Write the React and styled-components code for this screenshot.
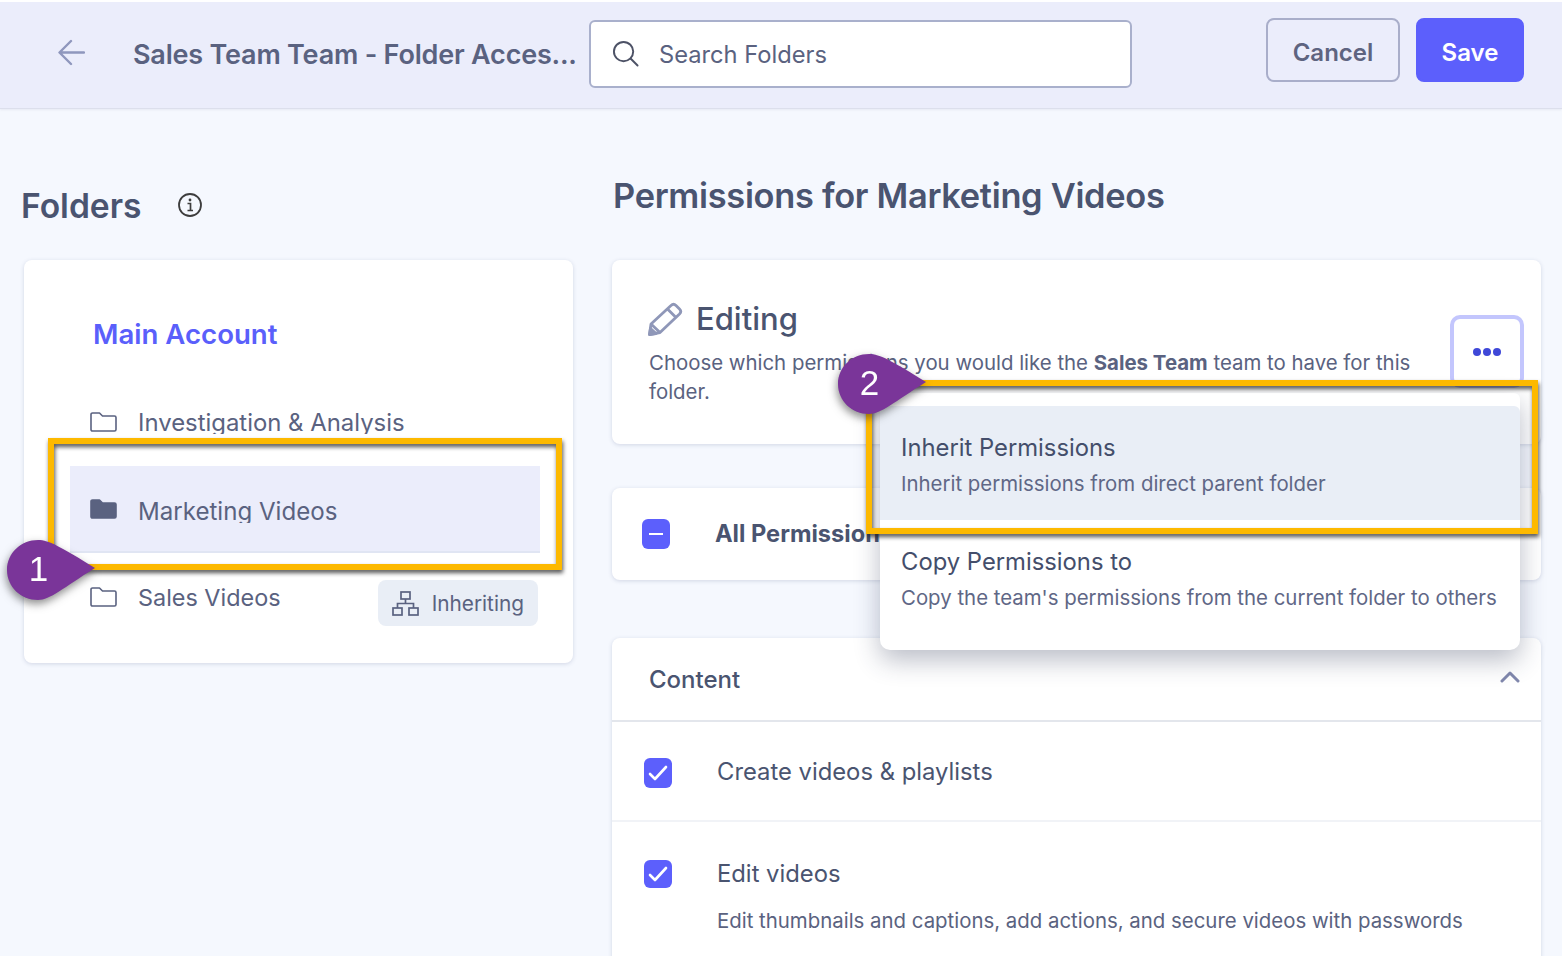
import styled, { createGlobalStyle } from 'styled-components';

const GlobalStyle = createGlobalStyle`
  html, body {
    margin: 0;
    padding: 0;
    height: 100%;
    overflow: hidden;
    background: #f5f8fe;
    font-family: Inter, "Noto Sans", sans-serif;
    color: #5a6280;
  }
  * { box-sizing: border-box; }
`;

const Page = styled.div`
  position: relative;
  width: 1562px;
  height: 956px;
  overflow: hidden;
  border-top: 2px solid #fff;
`;

const Header = styled.header`
  display: flex;
  align-items: center;
  height: 107px;
  padding: 0 38px 0 58px;
  background: #ebedfb;
  border-bottom: 1px solid #dcdfec;
  box-shadow: 0 1px 2px rgba(60, 70, 110, 0.08);
`;

const BackButton = styled.button`
  display: flex;
  width: 27px;
  height: 27px;
  margin: 0 48px 6px 0;
  padding: 0;
  border: 0;
  background: none;
  color: #8f97bd;
`;

const HeaderTitle = styled.h1`
  width: 456px;
  margin: 0 0 2px;
  font-size: 27px;
  font-weight: 600;
  letter-spacing: -0.2px;
  white-space: nowrap;
  color: #5a6280;
`;

const SearchBox = styled.div`
  display: flex;
  align-items: center;
  gap: 20px;
  width: 543px;
  height: 68px;
  margin-bottom: 2px;
  padding: 1px 0 0 21px;
  background: #fff;
  border: 2px solid #a9b0cc;
  border-radius: 6px;
  font-size: 23.7px;
  color: #5a6280;
  svg { margin-top: -2px; color: #4d5266; }
`;

const HeaderActions = styled.div`
  display: flex;
  gap: 16px;
  margin: 0 0 10px auto;
`;

const ActionButton = styled.button`
  height: 64px;
  width: ${p => p.$width}px;
  padding: 5px 0 0;
  border-radius: 8px;
  font: 600 24px Inter, sans-serif;
  border: 2px solid ${p => (p.$primary ? '#5c5ffc' : '#a9aeca')};
  background: ${p => (p.$primary ? '#5c5ffc' : 'transparent')};
  color: ${p => (p.$primary ? '#fff' : '#5e6480')};
`;

const Main = styled.main`
  display: flex;
  padding-left: 21px;
`;

const LeftColumn = styled.section`
  width: 552px;
  margin-right: 39px;
`;

const RightColumn = styled.section`
  width: 929px;
`;

const FoldersHead = styled.div`
  display: flex;
  align-items: center;
  gap: 37px;
  height: 151px;
  padding-top: 42px;
  svg { margin-top: -2px; color: #3d3d3d; }
`;

const FoldersTitle = styled.h2`
  margin: 0;
  font-size: 33.6px;
  font-weight: 600;
  color: #4a5470;
`;

const PermissionsHead = styled.div`
  display: flex;
  align-items: center;
  height: 151px;
  padding: 21px 0 0 1px;
`;

const PermissionsTitle = styled.h2`
  margin: 0;
  font-size: 34.4px;
  font-weight: 600;
  letter-spacing: -0.3px;
  color: #4a5470;
`;

const Card = styled.div`
  background: #fff;
  border-radius: 8px;
  box-shadow: 0 1px 4px rgba(70, 85, 130, 0.2);
`;

const FolderCard = styled(Card)`
  height: 403px;
  margin-left: 3px;
  padding: 56px 33px 0 46px;
`;

const AccountLink = styled.div`
  height: 64px;
  padding-left: 23px;
  font-size: 27.6px;
  line-height: 36px;
  font-weight: 600;
  color: #5a5ffb;
`;

const FolderRow = styled.div`
  display: flex;
  align-items: ${p => (p.$active ? 'center' : 'flex-start')};
  height: ${p => p.$height}px;
  margin-bottom: ${p => p.$after || 0}px;
  padding: ${p => p.$top || 0}px 2px 0 20px;
  background: ${p => (p.$active ? '#ebedfb' : 'transparent')};
  border-bottom: ${p => (p.$active ? '2px solid #e0e5f3' : '0')};
  svg { flex: none; margin-top: ${p => (p.$active ? 0 : 3)}px; color: #5a6280; }
`;

const FolderName = styled.span`
  display: block;
  height: 24px;
  margin: ${p => (p.$active ? 4 : 1)}px 0 0 21px;
  overflow: hidden;
  font-size: ${p => p.$size || 23.9}px;
  line-height: 26px;
  white-space: nowrap;
  color: #5a6280;
`;

const InheritChip = styled.div`
  display: flex;
  align-items: center;
  gap: 13px;
  height: 46px;
  margin: -4px 0 0 auto;
  padding: 0 14px;
  background: #e9eef6;
  border-radius: 8px;
  font-size: 20.8px;
  color: #5a6280;
  svg { margin-top: 0; }
`;

const EditingCard = styled(Card)`
  display: flex;
  height: 184px;
  margin-bottom: 44px;
  padding: 40px 17px 0 37px;
`;

const EditingBody = styled.div`
  flex: 1;
`;

const EditingTitle = styled.div`
  display: flex;
  align-items: center;
  gap: 13px;
  margin-left: -2px;
  font-size: 31px;
  font-weight: 500;
  color: #4a5470;
  svg { color: #8f97b8; }
`;

const Description = styled.p`
  width: 790px;
  margin: 11px 0 0;
  font-size: 20.4px;
  line-height: 29px;
  color: #5a6280;
  b { font-weight: 700; }
`;

const MoreButton = styled.button`
  display: flex;
  align-items: center;
  justify-content: center;
  flex: none;
  width: 74px;
  height: 73px;
  margin-top: 15px;
  padding: 0;
  background: #fff;
  border: 4px solid #c3c6fd;
  border-radius: 10px;
  color: #3f48d8;
`;

const AllCard = styled(Card)`
  display: flex;
  align-items: center;
  gap: 45px;
  height: 92px;
  margin-bottom: 58px;
  padding-left: 30px;
`;

const AllLabel = styled.span`
  margin-top: -2px;
  font-size: 23.6px;
  font-weight: 700;
  color: #4a5470;
`;

const CheckBox = styled.span`
  display: flex;
  align-items: center;
  justify-content: center;
  flex: none;
  width: 28px;
  height: ${p => p.$height || 30}px;
  background: #5c5ffc;
  border-radius: 6px;
  color: #fff;
`;

const ContentCard = styled(Card)`
  height: 400px;
`;

const ContentHead = styled.div`
  display: flex;
  align-items: center;
  justify-content: space-between;
  height: 84px;
  padding: 0 21px 0 37px;
  border-bottom: 2px solid #e3e6ec;
  font-size: 24px;
  font-weight: 500;
  color: #4a5470;
  svg { margin-bottom: 6px; color: #8188ad; }
`;

const PermissionRow = styled.div`
  display: flex;
  align-items: flex-start;
  gap: 45px;
  height: ${p => p.$height}px;
  padding: ${p => p.$top}px 0 0 32px;
  border-bottom: ${p => (p.$last ? '0' : '2px solid #f1f3f7')};
`;

const PermissionLabel = styled.div`
  font-size: 23.8px;
  line-height: 28px;
  color: #4a5470;
`;

const PermissionNote = styled.div`
  margin-top: 19px;
  font-size: 20.4px;
  line-height: 28px;
  color: #5a6280;
`;

const Menu = styled.div`
  position: absolute;
  left: 880px;
  top: 391px;
  width: 640px;
  height: 257px;
  padding-top: 13px;
  background: #fff;
  border-radius: 6px 6px 10px 10px;
  box-shadow: 0 10px 26px rgba(40, 50, 80, 0.32);
`;

const MenuItem = styled.div`
  height: ${p => (p.$active ? 114 : 130)}px;
  padding: 27px 0 0 21px;
  background: ${p => (p.$active ? '#e9eef6' : 'transparent')};
  border-radius: ${p => (p.$active ? '6px 6px 0 0' : '0')};
`;

const MenuTitle = styled.div`
  font-size: 23.8px;
  line-height: 30px;
  color: #444e6b;
`;

const MenuNote = styled.div`
  margin-top: 6px;
  font-size: 20.4px;
  line-height: 30px;
  color: #5f6786;
`;

const Highlight = styled.div`
  position: absolute;
  left: ${p => p.$left}px;
  top: ${p => p.$top}px;
  width: ${p => p.$width}px;
  height: ${p => p.$height}px;
  border: 6px solid #fdb900;
  filter: drop-shadow(1px 3px 2px rgba(30, 30, 30, 0.75));
`;

const Marker = styled.div`
  position: absolute;
  left: ${p => p.$left}px;
  top: ${p => p.$top}px;
  width: 96px;
  height: 68px;
  filter: drop-shadow(-1px 4px 4px rgba(30, 30, 30, 0.5));
  svg { display: block; }
`;

const MarkerNumber = styled.span`
  position: absolute;
  left: 0;
  top: 0;
  width: 63px;
  height: 58px;
  font: 500 35px/58px "Liberation Sans", sans-serif;
  text-align: center;
  color: #fff;
`;

const Arrow = () => (
  <svg width="27" height="27" viewBox="0 0 27 27" fill="none" stroke="currentColor" strokeWidth="2.4" strokeLinecap="round" strokeLinejoin="round">
    <path d="M26 13.5H2M13 2 1.5 13.5 13 25" />
  </svg>
);

const Search = () => (
  <svg width="27" height="27" viewBox="0 0 28 28" fill="none" stroke="currentColor" strokeWidth="2" strokeLinecap="round">
    <circle cx="12" cy="12" r="10" />
    <path d="m19.5 19.5 7 7" />
  </svg>
);

const Info = () => (
  <svg width="24" height="24" viewBox="0 0 24 24" fill="none" stroke="currentColor">
    <circle cx="12" cy="12" r="11" strokeWidth="1.8" />
    <circle cx="12" cy="7" r="1.4" fill="currentColor" stroke="none" />
    <path d="M9.5 10.5H12.5V17.5M9.5 17.5H15" strokeWidth="1.7" />
  </svg>
);

const Folder = ({ filled }) => (
  <svg width="27" height="20" viewBox="0 0 27 20" fill={filled ? 'currentColor' : 'none'} stroke="currentColor" strokeWidth="1.6" strokeLinejoin="round">
    <path d="M1 17.5V2.5C1 1.6 1.6 1 2.5 1H9.5L12.5 4H24.5C25.4 4 26 4.6 26 5.5V17.5C26 18.4 25.4 19 24.5 19H2.5C1.6 19 1 18.4 1 17.5Z" />
  </svg>
);

const Hierarchy = () => (
  <svg width="27" height="25" viewBox="0 0 27 25" fill="none" stroke="currentColor" strokeWidth="1.7">
    <rect x="9" y="1" width="9" height="7" />
    <rect x="1" y="17" width="9" height="7" />
    <rect x="17" y="17" width="9" height="7" />
    <path d="M13.5 8v4.500M5.500 17v-4.500h16V17" />
  </svg>
);

const Pencil = () => (
  <svg width="36" height="34" viewBox="0 0 36 34" fill="none" stroke="currentColor" strokeWidth="2.8" strokeLinejoin="round">
    <path d="M4 22 24 3.500C25.500 2 27.500 2 29 3.500L32.500 7C34 8.500 34 10.500 32.500 12L13 30.500 2.500 32.500Z" />
    <path d="m20.500 7 9 9M4 22l9 8.500" />
    <path d="M2.500 32.500 3.500 26.500 9 31.500Z" fill="currentColor" />
  </svg>
);

const Dots = () => (
  <svg width="30" height="10" viewBox="0 0 30 10" fill="currentColor">
    <circle cx="5" cy="5" r="4" />
    <circle cx="15" cy="5" r="4" />
    <circle cx="25" cy="5" r="4" />
  </svg>
);

const Check = () => (
  <svg width="20" height="16" viewBox="0 0 20 16" fill="none" stroke="currentColor" strokeWidth="2.6" strokeLinecap="round" strokeLinejoin="round">
    <path d="m2 9 5 5L18 2" />
  </svg>
);

const Minus = () => (
  <svg width="14" height="4" viewBox="0 0 14 4" fill="none" stroke="currentColor" strokeWidth="2">
    <path d="M0 2h14" />
  </svg>
);

const Chevron = () => (
  <svg width="20" height="13" viewBox="0 0 20 13" fill="none" stroke="currentColor" strokeWidth="3" strokeLinecap="round" strokeLinejoin="round">
    <path d="M2 11 10 3l8 8" />
  </svg>
);

const Drop = () => (
  <svg width="96" height="68" viewBox="0 0 96 68">
    <path d="M31 0C42 0 54 7 88 28 56 48 43 60 31 60 14 60 0 47 0 30S14 0 31 0Z" fill="#7a3599" />
  </svg>
);

function App() {
  return (
    <Page>
      <GlobalStyle />
      <Header>
        <BackButton><Arrow /></BackButton>
        <HeaderTitle>Sales Team Team - Folder Acces...</HeaderTitle>
        <SearchBox><Search />Search Folders</SearchBox>
        <HeaderActions>
          <ActionButton $width={134}>Cancel</ActionButton>
          <ActionButton $width={108} $primary>Save</ActionButton>
        </HeaderActions>
      </Header>
      <Main>
        <LeftColumn>
          <FoldersHead>
            <FoldersTitle>Folders</FoldersTitle>
            <Info />
          </FoldersHead>
          <FolderCard>
            <AccountLink>Main Account</AccountLink>
            <FolderRow $height={56} $top={29} $after={30}>
              <Folder /><FolderName>Investigation &amp; Analysis</FolderName>
            </FolderRow>
            <FolderRow $height={87} $active>
              <Folder filled /><FolderName $active $size={24.1}>Marketing Videos</FolderName>
            </FolderRow>
            <FolderRow $height={80} $top={31}>
              <Folder /><FolderName $size={23.4}>Sales Videos</FolderName>
              <InheritChip><Hierarchy />Inheriting</InheritChip>
            </FolderRow>
          </FolderCard>
        </LeftColumn>
        <RightColumn>
          <PermissionsHead>
            <PermissionsTitle>Permissions for Marketing Videos</PermissionsTitle>
          </PermissionsHead>
          <EditingCard>
            <EditingBody>
              <EditingTitle><Pencil />Editing</EditingTitle>
              <Description>
                Choose which permissions you would like the <b>Sales Team</b> team to have for this folder.
              </Description>
            </EditingBody>
            <MoreButton><Dots /></MoreButton>
          </EditingCard>
          <AllCard>
            <CheckBox><Minus /></CheckBox>
            <AllLabel>All Permissions</AllLabel>
          </AllCard>
          <ContentCard>
            <ContentHead>Content<Chevron /></ContentHead>
            <PermissionRow $height={100} $top={36}>
              <CheckBox><Check /></CheckBox>
              <PermissionLabel>Create videos &amp; playlists</PermissionLabel>
            </PermissionRow>
            <PermissionRow $height={200} $top={38} $last>
              <CheckBox $height={28}><Check /></CheckBox>
              <div>
                <PermissionLabel>Edit videos</PermissionLabel>
                <PermissionNote>Edit thumbnails and captions, add actions, and secure videos with passwords</PermissionNote>
              </div>
            </PermissionRow>
          </ContentCard>
        </RightColumn>
      </Main>
      <Menu>
        <MenuItem $active>
          <MenuTitle>Inherit Permissions</MenuTitle>
          <MenuNote>Inherit permissions from direct parent folder</MenuNote>
        </MenuItem>
        <MenuItem>
          <MenuTitle>Copy Permissions to</MenuTitle>
          <MenuNote>Copy the team's permissions from the current folder to others</MenuNote>
        </MenuItem>
      </Menu>
      <Highlight $left={48} $top={436} $width={514} $height={132} />
      <Highlight $left={866} $top={378} $width={672} $height={154} />
      <Marker $left={7} $top={538}><Drop /><MarkerNumber>1</MarkerNumber></Marker>
      <Marker $left={838} $top={352}><Drop /><MarkerNumber>2</MarkerNumber></Marker>
    </Page>
  );
}

export default App;
